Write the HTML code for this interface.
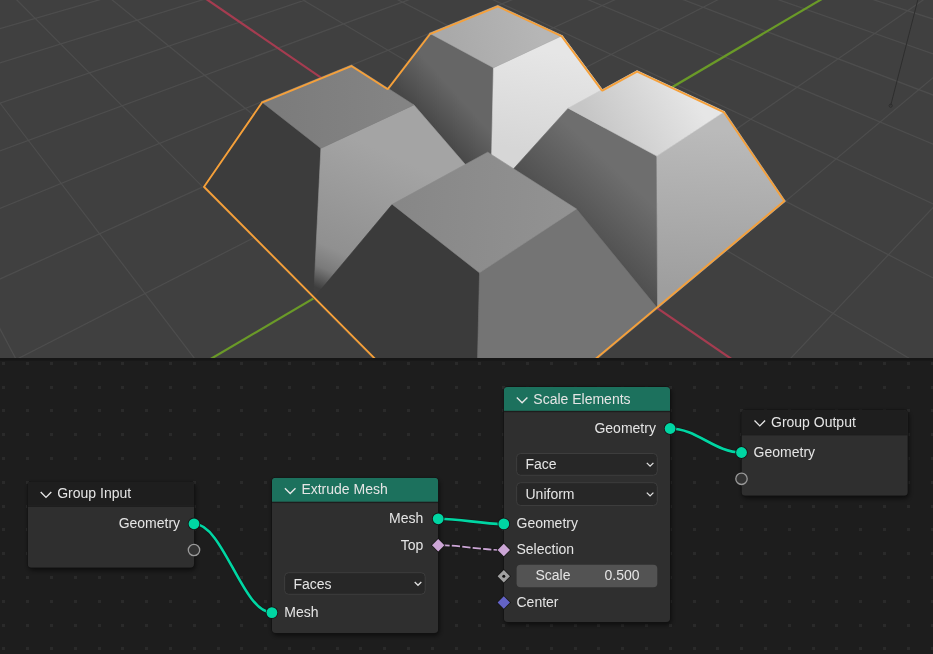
<!DOCTYPE html>
<html><head><meta charset="utf-8"><style>
html,body{margin:0;padding:0;width:933px;height:654px;overflow:hidden;background:#1d1d1d;}
body{position:relative;font-family:"Liberation Sans",sans-serif;}
</style></head><body>
<svg width="933" height="358" viewBox="0 0 933 358" style="position:absolute;left:0;top:0">
<rect width="933" height="358" fill="#404040"/>
<path d="M-361.01 63.88L511.22 -156.02M-358.99 95.48L542.42 -147.23M-356.69 131.59L575.85 -137.80M-354.04 173.25L611.77 -127.68M-350.94 221.84L650.46 -116.77M-347.28 279.26L692.25 -104.99M-342.88 348.16L737.54 -92.22M-337.52 432.34L786.77 -78.34M-330.81 537.54L840.50 -63.19M-310.70 852.93L964.14 -28.33M-294.63 1105.03L1035.75 -8.14M-270.54 1482.82L1115.36 14.30M-230.46 2111.52L1204.37 39.39M-150.52 3365.33L1304.57 67.64M-361.01 63.88L-150.52 3365.33M-258.28 37.98L375.12 2174.07M-166.22 14.77L648.55 1554.37M-83.24 -6.15L816.18 1174.48M-8.08 -25.10L929.46 917.76M60.34 -42.35L1011.13 732.66M180.25 -72.58L1121.02 483.60M233.09 -85.90L1159.76 395.81M281.90 -98.21L1191.56 323.75M327.13 -109.61L1218.13 263.52M369.16 -120.21L1240.67 212.45M408.31 -130.08L1260.03 168.58M444.88 -139.30L1276.83 130.50M479.11 -147.93L1291.56 97.13M511.22 -156.02L1304.57 67.64" stroke="#4d4d4d" stroke-width="1.2" fill="none"/>
<path d="M122.87 -58.11L1072.80 592.89" stroke="#a53c50" stroke-width="2.2" fill="none"/>
<path d="M-322.19 672.74L899.36 -46.60" stroke="#6a9a28" stroke-width="2.2" fill="none"/>
<path d="M917.8 0L890.7 105.5" stroke="#2e2e2e" stroke-width="1" fill="none"/>
<circle cx="890.7" cy="105.7" r="1.6" fill="none" stroke="#2c2c2c" stroke-width="0.9"/>
<defs><linearGradient id="bmy" gradientUnits="userSpaceOnUse" x1="440" y1="136" x2="470" y2="109"><stop offset="0" stop-color="#484848"/><stop offset="1" stop-color="#666666"/></linearGradient><linearGradient id="bpx" gradientUnits="userSpaceOnUse" x1="520" y1="150" x2="540" y2="50"><stop offset="0" stop-color="#d6d6d6"/><stop offset="1" stop-color="#e6e6e6"/></linearGradient><linearGradient id="btop" gradientUnits="userSpaceOnUse" x1="450" y1="50" x2="540" y2="30"><stop offset="0" stop-color="#a9a9a9"/><stop offset="1" stop-color="#b6b6b6"/></linearGradient><linearGradient id="lpx" gradientUnits="userSpaceOnUse" x1="380" y1="150" x2="315" y2="292"><stop offset="0" stop-color="#a4a4a4"/><stop offset="0.7" stop-color="#909090"/><stop offset="0.84" stop-color="#7a7a7a"/><stop offset="0.97" stop-color="#3e3e3e"/></linearGradient><linearGradient id="ltop" gradientUnits="userSpaceOnUse" x1="280" y1="100" x2="400" y2="100"><stop offset="0" stop-color="#7c7c7c"/><stop offset="1" stop-color="#848484"/></linearGradient><linearGradient id="rmy" gradientUnits="userSpaceOnUse" x1="600" y1="255" x2="650" y2="202"><stop offset="0" stop-color="#4e4e4e"/><stop offset="1" stop-color="#6e6e6e"/></linearGradient><linearGradient id="rpx" gradientUnits="userSpaceOnUse" x1="700" y1="130" x2="690" y2="290"><stop offset="0" stop-color="#bababa"/><stop offset="1" stop-color="#9e9e9e"/></linearGradient><linearGradient id="rtop" gradientUnits="userSpaceOnUse" x1="600" y1="140" x2="690" y2="90"><stop offset="0" stop-color="#c6c6c6"/><stop offset="1" stop-color="#e6e6e6"/></linearGradient><linearGradient id="ftop" gradientUnits="userSpaceOnUse" x1="400" y1="200" x2="570" y2="210"><stop offset="0" stop-color="#878787"/><stop offset="1" stop-color="#929292"/></linearGradient></defs>
<polygon points="369.76,111.08 490.77,194.01 493.48,67.76 429.53,33.20" fill="url(#bmy)" stroke="url(#bmy)" stroke-width="0.6" stroke-linejoin="round"/>
<polygon points="490.77,194.01 622.42,116.49 562.33,35.62 493.48,67.76" fill="url(#bpx)" stroke="url(#bpx)" stroke-width="0.6" stroke-linejoin="round"/>
<polygon points="429.53,33.20 493.48,67.76 562.33,35.62 497.73,5.40" fill="url(#btop)" stroke="url(#btop)" stroke-width="0.6" stroke-linejoin="round"/>
<polygon points="202.76,186.93 313.56,298.37 320.88,148.34 261.43,101.69" fill="#3c3c3c" stroke="#3c3c3c" stroke-width="0.6" stroke-linejoin="round"/>
<polygon points="313.56,298.37 490.77,194.01 413.90,104.91 320.88,148.34" fill="url(#lpx)" stroke="url(#lpx)" stroke-width="0.6" stroke-linejoin="round"/>
<polygon points="261.43,101.69 320.88,148.34 413.90,104.91 351.52,64.98" fill="url(#ltop)" stroke="url(#ltop)" stroke-width="0.6" stroke-linejoin="round"/>
<polygon points="490.77,194.01 657.55,308.31 656.81,156.04 568.25,108.17" fill="url(#rmy)" stroke="url(#rmy)" stroke-width="0.6" stroke-linejoin="round"/>
<polygon points="657.55,308.31 785.49,201.26 724.49,111.48 656.81,156.04" fill="url(#rpx)" stroke="url(#rpx)" stroke-width="0.6" stroke-linejoin="round"/>
<polygon points="568.25,108.17 656.81,156.04 724.49,111.48 637.06,70.58" fill="url(#rtop)" stroke="url(#rtop)" stroke-width="0.6" stroke-linejoin="round"/>
<polygon points="313.56,298.37 475.18,460.90 479.50,272.81 392.24,204.34" fill="#3b3b3b" stroke="#3b3b3b" stroke-width="0.6" stroke-linejoin="round"/>
<polygon points="475.18,460.90 657.55,308.31 576.46,208.96 479.50,272.81" fill="#747474" stroke="#747474" stroke-width="0.6" stroke-linejoin="round"/>
<polygon points="392.24,204.34 479.50,272.81 576.46,208.96 487.73,152.17" fill="url(#ftop)" stroke="url(#ftop)" stroke-width="0.6" stroke-linejoin="round"/>
<clipPath id="silc"><polygon points="202.76,186.93 261.43,101.69 351.52,64.98 387.47,88.00 429.53,33.20 497.73,5.40 562.33,35.62 602.38,89.52 637.06,70.58 724.49,111.48 785.49,201.26 475.18,460.90"/></clipPath>
<polygon points="202.76,186.93 261.43,101.69 351.52,64.98 387.47,88.00 429.53,33.20 497.73,5.40 562.33,35.62 602.38,89.52 637.06,70.58 724.49,111.48 785.49,201.26 475.18,460.90" fill="none" stroke="#f5a03a" stroke-width="3.8" stroke-linejoin="round" clip-path="url(#silc)"/>
</svg>
<svg width="933" height="296" viewBox="0 358 933 296" style="position:absolute;left:0;top:358px">
<rect x="0" y="358" width="933" height="296" fill="#1d1d1d"/>
<rect x="0" y="358" width="933" height="2.6" fill="#161616"/>
<path d="M2 362h3v3h-3zM2 386h3v3h-3zM2 409h3v3h-3zM2 433h3v3h-3zM2 457h3v3h-3zM2 481h3v3h-3zM2 505h3v3h-3zM2 528h3v3h-3zM2 552h3v3h-3zM2 576h3v3h-3zM2 600h3v3h-3zM2 624h3v3h-3zM2 647h3v3h-3zM26 362h3v3h-3zM26 386h3v3h-3zM26 409h3v3h-3zM26 433h3v3h-3zM26 457h3v3h-3zM26 481h3v3h-3zM26 505h3v3h-3zM26 528h3v3h-3zM26 552h3v3h-3zM26 576h3v3h-3zM26 600h3v3h-3zM26 624h3v3h-3zM26 647h3v3h-3zM50 362h3v3h-3zM50 386h3v3h-3zM50 409h3v3h-3zM50 433h3v3h-3zM50 457h3v3h-3zM50 481h3v3h-3zM50 505h3v3h-3zM50 528h3v3h-3zM50 552h3v3h-3zM50 576h3v3h-3zM50 600h3v3h-3zM50 624h3v3h-3zM50 647h3v3h-3zM74 362h3v3h-3zM74 386h3v3h-3zM74 409h3v3h-3zM74 433h3v3h-3zM74 457h3v3h-3zM74 481h3v3h-3zM74 505h3v3h-3zM74 528h3v3h-3zM74 552h3v3h-3zM74 576h3v3h-3zM74 600h3v3h-3zM74 624h3v3h-3zM74 647h3v3h-3zM98 362h3v3h-3zM98 386h3v3h-3zM98 409h3v3h-3zM98 433h3v3h-3zM98 457h3v3h-3zM98 481h3v3h-3zM98 505h3v3h-3zM98 528h3v3h-3zM98 552h3v3h-3zM98 576h3v3h-3zM98 600h3v3h-3zM98 624h3v3h-3zM98 647h3v3h-3zM121 362h3v3h-3zM121 386h3v3h-3zM121 409h3v3h-3zM121 433h3v3h-3zM121 457h3v3h-3zM121 481h3v3h-3zM121 505h3v3h-3zM121 528h3v3h-3zM121 552h3v3h-3zM121 576h3v3h-3zM121 600h3v3h-3zM121 624h3v3h-3zM121 647h3v3h-3zM145 362h3v3h-3zM145 386h3v3h-3zM145 409h3v3h-3zM145 433h3v3h-3zM145 457h3v3h-3zM145 481h3v3h-3zM145 505h3v3h-3zM145 528h3v3h-3zM145 552h3v3h-3zM145 576h3v3h-3zM145 600h3v3h-3zM145 624h3v3h-3zM145 647h3v3h-3zM169 362h3v3h-3zM169 386h3v3h-3zM169 409h3v3h-3zM169 433h3v3h-3zM169 457h3v3h-3zM169 481h3v3h-3zM169 505h3v3h-3zM169 528h3v3h-3zM169 552h3v3h-3zM169 576h3v3h-3zM169 600h3v3h-3zM169 624h3v3h-3zM169 647h3v3h-3zM193 362h3v3h-3zM193 386h3v3h-3zM193 409h3v3h-3zM193 433h3v3h-3zM193 457h3v3h-3zM193 481h3v3h-3zM193 505h3v3h-3zM193 528h3v3h-3zM193 552h3v3h-3zM193 576h3v3h-3zM193 600h3v3h-3zM193 624h3v3h-3zM193 647h3v3h-3zM217 362h3v3h-3zM217 386h3v3h-3zM217 409h3v3h-3zM217 433h3v3h-3zM217 457h3v3h-3zM217 481h3v3h-3zM217 505h3v3h-3zM217 528h3v3h-3zM217 552h3v3h-3zM217 576h3v3h-3zM217 600h3v3h-3zM217 624h3v3h-3zM217 647h3v3h-3zM240 362h3v3h-3zM240 386h3v3h-3zM240 409h3v3h-3zM240 433h3v3h-3zM240 457h3v3h-3zM240 481h3v3h-3zM240 505h3v3h-3zM240 528h3v3h-3zM240 552h3v3h-3zM240 576h3v3h-3zM240 600h3v3h-3zM240 624h3v3h-3zM240 647h3v3h-3zM264 362h3v3h-3zM264 386h3v3h-3zM264 409h3v3h-3zM264 433h3v3h-3zM264 457h3v3h-3zM264 481h3v3h-3zM264 505h3v3h-3zM264 528h3v3h-3zM264 552h3v3h-3zM264 576h3v3h-3zM264 600h3v3h-3zM264 624h3v3h-3zM264 647h3v3h-3zM288 362h3v3h-3zM288 386h3v3h-3zM288 409h3v3h-3zM288 433h3v3h-3zM288 457h3v3h-3zM288 481h3v3h-3zM288 505h3v3h-3zM288 528h3v3h-3zM288 552h3v3h-3zM288 576h3v3h-3zM288 600h3v3h-3zM288 624h3v3h-3zM288 647h3v3h-3zM312 362h3v3h-3zM312 386h3v3h-3zM312 409h3v3h-3zM312 433h3v3h-3zM312 457h3v3h-3zM312 481h3v3h-3zM312 505h3v3h-3zM312 528h3v3h-3zM312 552h3v3h-3zM312 576h3v3h-3zM312 600h3v3h-3zM312 624h3v3h-3zM312 647h3v3h-3zM336 362h3v3h-3zM336 386h3v3h-3zM336 409h3v3h-3zM336 433h3v3h-3zM336 457h3v3h-3zM336 481h3v3h-3zM336 505h3v3h-3zM336 528h3v3h-3zM336 552h3v3h-3zM336 576h3v3h-3zM336 600h3v3h-3zM336 624h3v3h-3zM336 647h3v3h-3zM359 362h3v3h-3zM359 386h3v3h-3zM359 409h3v3h-3zM359 433h3v3h-3zM359 457h3v3h-3zM359 481h3v3h-3zM359 505h3v3h-3zM359 528h3v3h-3zM359 552h3v3h-3zM359 576h3v3h-3zM359 600h3v3h-3zM359 624h3v3h-3zM359 647h3v3h-3zM383 362h3v3h-3zM383 386h3v3h-3zM383 409h3v3h-3zM383 433h3v3h-3zM383 457h3v3h-3zM383 481h3v3h-3zM383 505h3v3h-3zM383 528h3v3h-3zM383 552h3v3h-3zM383 576h3v3h-3zM383 600h3v3h-3zM383 624h3v3h-3zM383 647h3v3h-3zM407 362h3v3h-3zM407 386h3v3h-3zM407 409h3v3h-3zM407 433h3v3h-3zM407 457h3v3h-3zM407 481h3v3h-3zM407 505h3v3h-3zM407 528h3v3h-3zM407 552h3v3h-3zM407 576h3v3h-3zM407 600h3v3h-3zM407 624h3v3h-3zM407 647h3v3h-3zM431 362h3v3h-3zM431 386h3v3h-3zM431 409h3v3h-3zM431 433h3v3h-3zM431 457h3v3h-3zM431 481h3v3h-3zM431 505h3v3h-3zM431 528h3v3h-3zM431 552h3v3h-3zM431 576h3v3h-3zM431 600h3v3h-3zM431 624h3v3h-3zM431 647h3v3h-3zM455 362h3v3h-3zM455 386h3v3h-3zM455 409h3v3h-3zM455 433h3v3h-3zM455 457h3v3h-3zM455 481h3v3h-3zM455 505h3v3h-3zM455 528h3v3h-3zM455 552h3v3h-3zM455 576h3v3h-3zM455 600h3v3h-3zM455 624h3v3h-3zM455 647h3v3h-3zM478 362h3v3h-3zM478 386h3v3h-3zM478 409h3v3h-3zM478 433h3v3h-3zM478 457h3v3h-3zM478 481h3v3h-3zM478 505h3v3h-3zM478 528h3v3h-3zM478 552h3v3h-3zM478 576h3v3h-3zM478 600h3v3h-3zM478 624h3v3h-3zM478 647h3v3h-3zM502 362h3v3h-3zM502 386h3v3h-3zM502 409h3v3h-3zM502 433h3v3h-3zM502 457h3v3h-3zM502 481h3v3h-3zM502 505h3v3h-3zM502 528h3v3h-3zM502 552h3v3h-3zM502 576h3v3h-3zM502 600h3v3h-3zM502 624h3v3h-3zM502 647h3v3h-3zM526 362h3v3h-3zM526 386h3v3h-3zM526 409h3v3h-3zM526 433h3v3h-3zM526 457h3v3h-3zM526 481h3v3h-3zM526 505h3v3h-3zM526 528h3v3h-3zM526 552h3v3h-3zM526 576h3v3h-3zM526 600h3v3h-3zM526 624h3v3h-3zM526 647h3v3h-3zM550 362h3v3h-3zM550 386h3v3h-3zM550 409h3v3h-3zM550 433h3v3h-3zM550 457h3v3h-3zM550 481h3v3h-3zM550 505h3v3h-3zM550 528h3v3h-3zM550 552h3v3h-3zM550 576h3v3h-3zM550 600h3v3h-3zM550 624h3v3h-3zM550 647h3v3h-3zM574 362h3v3h-3zM574 386h3v3h-3zM574 409h3v3h-3zM574 433h3v3h-3zM574 457h3v3h-3zM574 481h3v3h-3zM574 505h3v3h-3zM574 528h3v3h-3zM574 552h3v3h-3zM574 576h3v3h-3zM574 600h3v3h-3zM574 624h3v3h-3zM574 647h3v3h-3zM597 362h3v3h-3zM597 386h3v3h-3zM597 409h3v3h-3zM597 433h3v3h-3zM597 457h3v3h-3zM597 481h3v3h-3zM597 505h3v3h-3zM597 528h3v3h-3zM597 552h3v3h-3zM597 576h3v3h-3zM597 600h3v3h-3zM597 624h3v3h-3zM597 647h3v3h-3zM621 362h3v3h-3zM621 386h3v3h-3zM621 409h3v3h-3zM621 433h3v3h-3zM621 457h3v3h-3zM621 481h3v3h-3zM621 505h3v3h-3zM621 528h3v3h-3zM621 552h3v3h-3zM621 576h3v3h-3zM621 600h3v3h-3zM621 624h3v3h-3zM621 647h3v3h-3zM645 362h3v3h-3zM645 386h3v3h-3zM645 409h3v3h-3zM645 433h3v3h-3zM645 457h3v3h-3zM645 481h3v3h-3zM645 505h3v3h-3zM645 528h3v3h-3zM645 552h3v3h-3zM645 576h3v3h-3zM645 600h3v3h-3zM645 624h3v3h-3zM645 647h3v3h-3zM669 362h3v3h-3zM669 386h3v3h-3zM669 409h3v3h-3zM669 433h3v3h-3zM669 457h3v3h-3zM669 481h3v3h-3zM669 505h3v3h-3zM669 528h3v3h-3zM669 552h3v3h-3zM669 576h3v3h-3zM669 600h3v3h-3zM669 624h3v3h-3zM669 647h3v3h-3zM693 362h3v3h-3zM693 386h3v3h-3zM693 409h3v3h-3zM693 433h3v3h-3zM693 457h3v3h-3zM693 481h3v3h-3zM693 505h3v3h-3zM693 528h3v3h-3zM693 552h3v3h-3zM693 576h3v3h-3zM693 600h3v3h-3zM693 624h3v3h-3zM693 647h3v3h-3zM716 362h3v3h-3zM716 386h3v3h-3zM716 409h3v3h-3zM716 433h3v3h-3zM716 457h3v3h-3zM716 481h3v3h-3zM716 505h3v3h-3zM716 528h3v3h-3zM716 552h3v3h-3zM716 576h3v3h-3zM716 600h3v3h-3zM716 624h3v3h-3zM716 647h3v3h-3zM740 362h3v3h-3zM740 386h3v3h-3zM740 409h3v3h-3zM740 433h3v3h-3zM740 457h3v3h-3zM740 481h3v3h-3zM740 505h3v3h-3zM740 528h3v3h-3zM740 552h3v3h-3zM740 576h3v3h-3zM740 600h3v3h-3zM740 624h3v3h-3zM740 647h3v3h-3zM764 362h3v3h-3zM764 386h3v3h-3zM764 409h3v3h-3zM764 433h3v3h-3zM764 457h3v3h-3zM764 481h3v3h-3zM764 505h3v3h-3zM764 528h3v3h-3zM764 552h3v3h-3zM764 576h3v3h-3zM764 600h3v3h-3zM764 624h3v3h-3zM764 647h3v3h-3zM788 362h3v3h-3zM788 386h3v3h-3zM788 409h3v3h-3zM788 433h3v3h-3zM788 457h3v3h-3zM788 481h3v3h-3zM788 505h3v3h-3zM788 528h3v3h-3zM788 552h3v3h-3zM788 576h3v3h-3zM788 600h3v3h-3zM788 624h3v3h-3zM788 647h3v3h-3zM812 362h3v3h-3zM812 386h3v3h-3zM812 409h3v3h-3zM812 433h3v3h-3zM812 457h3v3h-3zM812 481h3v3h-3zM812 505h3v3h-3zM812 528h3v3h-3zM812 552h3v3h-3zM812 576h3v3h-3zM812 600h3v3h-3zM812 624h3v3h-3zM812 647h3v3h-3zM835 362h3v3h-3zM835 386h3v3h-3zM835 409h3v3h-3zM835 433h3v3h-3zM835 457h3v3h-3zM835 481h3v3h-3zM835 505h3v3h-3zM835 528h3v3h-3zM835 552h3v3h-3zM835 576h3v3h-3zM835 600h3v3h-3zM835 624h3v3h-3zM835 647h3v3h-3zM859 362h3v3h-3zM859 386h3v3h-3zM859 409h3v3h-3zM859 433h3v3h-3zM859 457h3v3h-3zM859 481h3v3h-3zM859 505h3v3h-3zM859 528h3v3h-3zM859 552h3v3h-3zM859 576h3v3h-3zM859 600h3v3h-3zM859 624h3v3h-3zM859 647h3v3h-3zM883 362h3v3h-3zM883 386h3v3h-3zM883 409h3v3h-3zM883 433h3v3h-3zM883 457h3v3h-3zM883 481h3v3h-3zM883 505h3v3h-3zM883 528h3v3h-3zM883 552h3v3h-3zM883 576h3v3h-3zM883 600h3v3h-3zM883 624h3v3h-3zM883 647h3v3h-3zM907 362h3v3h-3zM907 386h3v3h-3zM907 409h3v3h-3zM907 433h3v3h-3zM907 457h3v3h-3zM907 481h3v3h-3zM907 505h3v3h-3zM907 528h3v3h-3zM907 552h3v3h-3zM907 576h3v3h-3zM907 600h3v3h-3zM907 624h3v3h-3zM907 647h3v3h-3zM931 362h3v3h-3zM931 386h3v3h-3zM931 409h3v3h-3zM931 433h3v3h-3zM931 457h3v3h-3zM931 481h3v3h-3zM931 505h3v3h-3zM931 528h3v3h-3zM931 552h3v3h-3zM931 576h3v3h-3zM931 600h3v3h-3zM931 624h3v3h-3zM931 647h3v3h-3z" fill="#2a2a2a"/>
</svg>
<svg width="933" height="296" viewBox="0 358 933 296" style="position:absolute;left:0;top:358px;font-family:'Liberation Sans',sans-serif">
<defs><filter id="sh" x="-20%" y="-20%" width="140%" height="140%"><feGaussianBlur stdDeviation="2.2"/></filter></defs>
<path d="M194.0 523.8000000000001C223.21249999999998 523.8000000000001 242.6875 612.6 271.9 612.6" stroke="#111" stroke-opacity="0.55" stroke-width="3.8" fill="none"/>
<path d="M194.0 523.8000000000001C223.21249999999998 523.8000000000001 242.6875 612.6 271.9 612.6" stroke="#00d6a3" stroke-width="2.6" fill="none"/>
<path d="M438.2 518.8C462.8 518.8 479.2 523.9 503.8 523.9" stroke="#111" stroke-opacity="0.55" stroke-width="3.8" fill="none"/>
<path d="M438.2 518.8C462.8 518.8 479.2 523.9 503.8 523.9" stroke="#00d6a3" stroke-width="2.6" fill="none"/>
<path d="M670.1 428.5C696.875 428.5 714.725 452.5 741.5 452.5" stroke="#111" stroke-opacity="0.55" stroke-width="3.8" fill="none"/>
<path d="M670.1 428.5C696.875 428.5 714.725 452.5 741.5 452.5" stroke="#00d6a3" stroke-width="2.6" fill="none"/>
<path d="M438.2 545.2C462.8 545.2 479.2 550.0 503.8 550.0" stroke="#111" stroke-opacity="0.55" stroke-width="2.9" fill="none"/>
<path d="M438.2 545.2C462.8 545.2 479.2 550.0 503.8 550.0" stroke="#cca6d6" stroke-width="1.7" fill="none" stroke-dasharray="8.4 2.2" stroke-dashoffset="-2.8"/>
<g style="opacity:0.999">
<rect x="28.2" y="483.1" width="167.3" height="87.6" rx="5" fill="#000" opacity="0.5" filter="url(#sh)"/>
<rect x="27.099999999999998" y="481.0" width="167.5" height="87.3" rx="4.8" fill="#151515"/>
<clipPath id="c27"><rect x="27.7" y="481.6" width="166.3" height="86.1" rx="4"/></clipPath>
<g clip-path="url(#c27)">
<rect x="27.7" y="481.6" width="166.3" height="86.1" fill="#303030"/>
<rect x="27.7" y="481.6" width="166.3" height="24.0" fill="#1f1f1f"/>
<rect x="27.7" y="505.6" width="166.3" height="1.3" fill="#1a1a1a" opacity="0.8"/>
</g>
<path d="M40.7 492.1L46.0 497.40000000000003L51.3 492.1" stroke="#e8e8e8" stroke-width="1.35" fill="none"/>
<text x="57.2" y="498.20000000000005" font-size="14" fill="#e6e6e6">Group Input</text>
<text x="180.1" y="527.9" font-size="14" fill="#e6e6e6" text-anchor="end">Geometry</text>
<rect x="272.4" y="479.3" width="167.3" height="156.7" rx="5" fill="#000" opacity="0.5" filter="url(#sh)"/>
<rect x="271.29999999999995" y="477.2" width="167.5" height="156.39999999999998" rx="4.8" fill="#151515"/>
<clipPath id="c271"><rect x="271.9" y="477.8" width="166.3" height="155.2" rx="4"/></clipPath>
<g clip-path="url(#c271)">
<rect x="271.9" y="477.8" width="166.3" height="155.2" fill="#303030"/>
<rect x="271.9" y="477.8" width="166.3" height="24.0" fill="#1d725e"/>
<rect x="271.9" y="501.8" width="166.3" height="1.3" fill="#1a1a1a" opacity="0.8"/>
</g>
<path d="M284.9 488.3L290.2 493.6L295.5 488.3" stroke="#e8e8e8" stroke-width="1.35" fill="none"/>
<text x="301.4" y="494.40000000000003" font-size="14" fill="#e6e6e6">Extrude Mesh</text>
<text x="423.3" y="523.1" font-size="14" fill="#e6e6e6" text-anchor="end">Mesh</text>
<text x="423.3" y="549.6" font-size="14" fill="#e6e6e6" text-anchor="end">Top</text>
<rect x="284.59999999999997" y="572.7" width="140.60000000000002" height="21.59999999999991" rx="4" fill="#282828" stroke="#3e3e3e" stroke-width="1"/><text x="293.5" y="588.5" font-size="14" fill="#e6e6e6" text-anchor="start">Faces</text><path d="M414.7 582.0L418.0 585.3000000000001L421.3 582.0" stroke="#e0e0e0" stroke-width="1.3" fill="none"/>
<text x="284.3" y="616.8" font-size="14" fill="#e6e6e6" text-anchor="start">Mesh</text>
<rect x="504.3" y="388.4" width="167.3" height="236.6" rx="5" fill="#000" opacity="0.5" filter="url(#sh)"/>
<rect x="503.2" y="386.29999999999995" width="167.5" height="236.29999999999998" rx="4.8" fill="#151515"/>
<clipPath id="c503"><rect x="503.8" y="386.9" width="166.3" height="235.1" rx="4"/></clipPath>
<g clip-path="url(#c503)">
<rect x="503.8" y="386.9" width="166.3" height="235.1" fill="#303030"/>
<rect x="503.8" y="386.9" width="166.3" height="24.0" fill="#1d725e"/>
<rect x="503.8" y="410.9" width="166.3" height="1.3" fill="#1a1a1a" opacity="0.8"/>
</g>
<path d="M516.8000000000001 397.4L522.1 402.7L527.4 397.4" stroke="#e8e8e8" stroke-width="1.35" fill="none"/>
<text x="533.3" y="403.5" font-size="14" fill="#e6e6e6">Scale Elements</text>
<text x="655.9" y="432.59999999999997" font-size="14" fill="#e6e6e6" text-anchor="end">Geometry</text>
<rect x="516.6" y="453.5" width="140.69999999999993" height="21.799999999999955" rx="4" fill="#282828" stroke="#3e3e3e" stroke-width="1"/><text x="525.5" y="469.4" font-size="14" fill="#e6e6e6" text-anchor="start">Face</text><path d="M646.8 462.9L650.0999999999999 466.2L653.3999999999999 462.9" stroke="#e0e0e0" stroke-width="1.3" fill="none"/>
<rect x="516.6" y="482.7" width="140.69999999999993" height="22.80000000000001" rx="4" fill="#282828" stroke="#3e3e3e" stroke-width="1"/><text x="525.5" y="499.1" font-size="14" fill="#e6e6e6" text-anchor="start">Uniform</text><path d="M646.8 492.6L650.0999999999999 495.90000000000003L653.3999999999999 492.6" stroke="#e0e0e0" stroke-width="1.3" fill="none"/>
<text x="516.5" y="528.0" font-size="14" fill="#e6e6e6" text-anchor="start">Geometry</text>
<text x="516.5" y="554.0" font-size="14" fill="#e6e6e6" text-anchor="start">Selection</text>
<rect x="516.6" y="564.8" width="140.7" height="22.5" rx="4" fill="#545454"/>
<text x="535.5" y="580.2" font-size="14" fill="#e6e6e6" text-anchor="start">Scale</text>
<text x="639.5" y="580.2" font-size="14" fill="#e6e6e6" text-anchor="end">0.500</text>
<text x="516.5" y="606.5999999999999" font-size="14" fill="#e6e6e6" text-anchor="start">Center</text>
<rect x="742.0" y="411.6" width="167.3" height="87.1" rx="5" fill="#000" opacity="0.5" filter="url(#sh)"/>
<rect x="740.9" y="409.5" width="167.5" height="86.8" rx="4.8" fill="#151515"/>
<clipPath id="c741"><rect x="741.5" y="410.1" width="166.3" height="85.6" rx="4"/></clipPath>
<g clip-path="url(#c741)">
<rect x="741.5" y="410.1" width="166.3" height="85.6" fill="#303030"/>
<rect x="741.5" y="410.1" width="166.3" height="24.0" fill="#1f1f1f"/>
<rect x="741.5" y="434.1" width="166.3" height="1.3" fill="#1a1a1a" opacity="0.8"/>
</g>
<path d="M754.5 420.6L759.8 425.90000000000003L765.0999999999999 420.6" stroke="#e8e8e8" stroke-width="1.35" fill="none"/>
<text x="771.0" y="426.70000000000005" font-size="14" fill="#e6e6e6">Group Output</text>
<text x="753.6" y="456.6" font-size="14" fill="#e6e6e6" text-anchor="start">Geometry</text>
</g>
<circle cx="194.0" cy="523.8000000000001" r="6.2" fill="#151515"/><circle cx="194.0" cy="523.8000000000001" r="5.4" fill="#00d6a3"/>
<circle cx="194.0" cy="550.0" r="5.7" fill="#333333" stroke="#9a9a9a" stroke-width="1.3"/>
<circle cx="438.2" cy="518.8" r="6.2" fill="#151515"/><circle cx="438.2" cy="518.8" r="5.4" fill="#00d6a3"/>
<path d="M438.2 538.0L445.4 545.2L438.2 552.4000000000001L431.0 545.2Z" fill="#151515"/><path d="M438.2 539.0L444.4 545.2L438.2 551.4000000000001L432.0 545.2Z" fill="#cca6d6"/>
<circle cx="271.9" cy="612.6" r="6.2" fill="#151515"/><circle cx="271.9" cy="612.6" r="5.4" fill="#00d6a3"/>
<circle cx="670.1" cy="428.5" r="6.2" fill="#151515"/><circle cx="670.1" cy="428.5" r="5.4" fill="#00d6a3"/>
<circle cx="503.8" cy="523.9" r="6.2" fill="#151515"/><circle cx="503.8" cy="523.9" r="5.4" fill="#00d6a3"/>
<path d="M503.8 542.8L511.0 550.0L503.8 557.2L496.6 550.0Z" fill="#151515"/><path d="M503.8 543.8L510.0 550.0L503.8 556.2L497.6 550.0Z" fill="#cca6d6"/>
<path d="M503.8 569.0999999999999L511.0 576.3L503.8 583.5L496.6 576.3Z" fill="#151515"/><path d="M503.8 570.0999999999999L510.0 576.3L503.8 582.5L497.6 576.3Z" fill="#a1a1a1"/><circle cx="503.8" cy="576.3" r="1.5" fill="#111"/>
<path d="M503.8 595.3L511.0 602.5L503.8 609.7L496.6 602.5Z" fill="#151515"/><path d="M503.8 596.3L510.0 602.5L503.8 608.7L497.6 602.5Z" fill="#6363c7"/>
<circle cx="741.5" cy="452.5" r="6.2" fill="#151515"/><circle cx="741.5" cy="452.5" r="5.4" fill="#00d6a3"/>
<circle cx="741.5" cy="478.8" r="5.7" fill="#333333" stroke="#9a9a9a" stroke-width="1.3"/>
</svg>
</body></html>
